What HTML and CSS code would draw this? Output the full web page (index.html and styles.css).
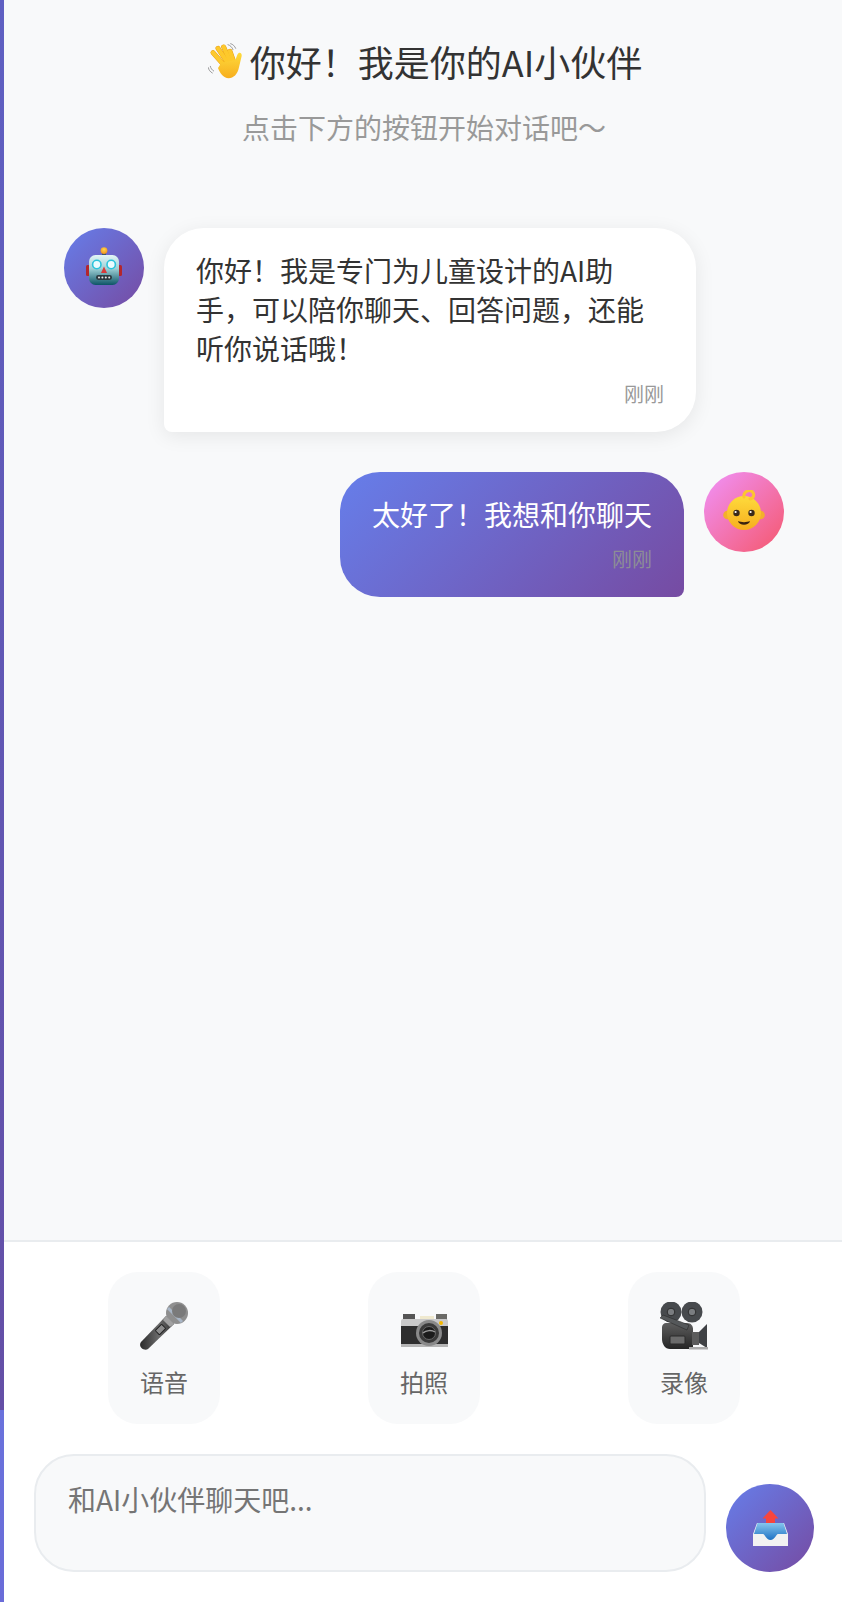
FILE: index.html
```html
<!DOCTYPE html>
<html lang="zh-CN">
<head>
<meta charset="utf-8">
<title>AI小伙伴</title>
<link rel="stylesheet" href="styles.css">
</head>
<body>
<svg class="defs" aria-hidden="true">
  <defs>
    <linearGradient id="robotHead" x1="0" y1="0" x2="0" y2="1"><stop offset="0" stop-color="#e4f5f6"/><stop offset=".45" stop-color="#9fd0d6"/><stop offset="1" stop-color="#0d5566"/></linearGradient>
    <radialGradient id="ball" cx=".5" cy=".35" r=".7"><stop offset="0" stop-color="#ffd84a"/><stop offset="1" stop-color="#f08a1c"/></radialGradient>
    <linearGradient id="yellow" x1="0" y1="0" x2="0" y2="1"><stop offset="0" stop-color="#fedb3c"/><stop offset="1" stop-color="#f7ae1e"/></linearGradient>
    <linearGradient id="micBody" x1="0" y1="0" x2="1" y2="0"><stop offset="0" stop-color="#2a2a2a"/><stop offset=".55" stop-color="#6c6c6c"/><stop offset="1" stop-color="#333"/></linearGradient>
    <linearGradient id="camBody" x1="0" y1="0" x2="0" y2="1"><stop offset="0" stop-color="#5e5e5e"/><stop offset="1" stop-color="#252525"/></linearGradient>
    <linearGradient id="trayBlue" x1="0" y1="0" x2="0" y2="1"><stop offset="0" stop-color="#86c6ee"/><stop offset="1" stop-color="#1f72c4"/></linearGradient>
  </defs>
</svg>
<div class="rail"></div>
<main class="app">
  <header class="hero">
    <h1 class="hero-title">
      <svg class="emoji-hand" viewBox="0 0 105 106" aria-hidden="true">
        <g fill="none" stroke="#8d8d8d" stroke-width="2.6" stroke-linecap="round"><path d="M60 4c7 2 13 8 15 15"/><path d="M68 1c7 2 12 7 15 14"/><path d="M1 73c1 7 6 13 12 16"/><path d="M7 69c1 6 5 11 10 14"/></g>
        <g fill="none" stroke="#e79d12" stroke-width="15" stroke-linecap="round"><path d="M15 28 52 70"/><path d="M30 15 60 60"/><path d="M47 11 68 58"/><path d="M66 24 78 58"/></g>
        <g fill="none" stroke="#fdc92c" stroke-width="12.500" stroke-linecap="round"><path d="M15 28 52 70"/><path d="M30 15 60 60"/><path d="M47 11 68 58"/><path d="M66 24 78 58"/></g>
        <path d="M40 58 82 50 88 34C92 24 103 27 101 38L93 72C89 93 76 105 62 105 46 104 36 90 30 74Z" fill="url(#yellow)"/>
      </svg><span>你好！我是你的AI小伙伴</span>
    </h1>
    <p class="hero-sub">点击下方的按钮开始对话吧～</p>
  </header>

  <section class="thread">
    <article class="msg">
      <div class="avatar avatar-bot">
        <svg class="emoji-robot" viewBox="0 0 36 38" aria-hidden="true">
          <rect x="0" y="18" width="4" height="11" rx="1.500" fill="#b3262c"/><rect x="32" y="18" width="4" height="11" rx="1.500" fill="#b3262c"/>
          <rect x="16" y="6" width="4" height="4" fill="#3a5a66"/><circle cx="18" cy="3.600" r="3.400" fill="url(#ball)"/>
          <rect x="3" y="8" width="30" height="30" rx="6.500" fill="url(#robotHead)"/>
          <circle cx="10.800" cy="17.500" r="4.200" fill="#eafcff" stroke="#2bc4dc" stroke-width="1.600"/><circle cx="25.200" cy="17.500" r="4.200" fill="#eafcff" stroke="#2bc4dc" stroke-width="1.600"/>
          <path d="M18 19.500 21 26H15Z" fill="#d83a3a"/>
          <rect x="10" y="28" width="16" height="5" rx="2.400" fill="#2d3a40"/>
          <g fill="#e8e8e8"><circle cx="13" cy="30.500" r="1"/><circle cx="16.400" cy="30.500" r="1"/><circle cx="19.800" cy="30.500" r="1"/><circle cx="23.200" cy="30.500" r="1"/></g>
        </svg>
      </div>
      <div class="bubble bubble-in">
        <p class="bubble-text">你好！我是专门为儿童设计的AI助手，可以陪你聊天、回答问题，还能听你说话哦！</p>
        <time class="bubble-time">刚刚</time>
      </div>
    </article>
    <article class="msg msg-out">
      <div class="bubble bubble-out">
        <p class="bubble-text">太好了！我想和你聊天</p>
        <time class="bubble-time">刚刚</time>
      </div>
      <div class="avatar avatar-kid">
        <svg class="emoji-baby" viewBox="0 0 42 40" aria-hidden="true">
          <circle cx="4.500" cy="25" r="4.300" fill="#f3b02c"/><circle cx="37.500" cy="25" r="4.300" fill="#f3b02c"/>
          <circle cx="21" cy="23" r="17" fill="url(#yellow)"/>
          <path d="M21 7C20 2 26-1 29 1.500 32 4 31 8 27 9" fill="none" stroke="#fcc62e" stroke-width="3" stroke-linecap="round"/>
          <circle cx="13.500" cy="23" r="3.200" fill="#3a2a1a"/><circle cx="28.500" cy="23" r="3.200" fill="#3a2a1a"/>
          <circle cx="12.600" cy="22" r="1.100" fill="#fff"/><circle cx="27.600" cy="22" r="1.100" fill="#fff"/>
          <path d="M15 31C18 32.500 24 32.500 27 31 26 36 16 36 15 31Z" fill="#3a2410"/>
        </svg>
      </div>
    </article>
  </section>

  <footer class="dock">
    <div class="tools">
      <button class="tool" type="button">
        <svg class="tool-icon" viewBox="0 0 48 48" aria-hidden="true">
          <path d="M26 14 34 22 8 47C6 48.500 3 47.500 1.500 46 0 44.500-.5 42 1 40Z" fill="url(#micBody)"/>
          <rect x="17.500" y="23" width="6" height="9" rx="1" transform="rotate(45 20.500 27.500)" fill="#8c8c8c" stroke="#222"/>
          <path d="M24 17 31 24 35 20 28 13Z" fill="#777"/>
          <circle cx="37" cy="11" r="11" fill="#8f8f8f"/>
          <path d="M26 14 34 22 30 25 23 18Z" fill="#a2a2a2"/>
          <path d="M28 6 42 20" stroke="#a9b6c6" stroke-width="3"/>
          <circle cx="39" cy="9" r="7" fill="#7a7a7a"/>
        </svg>
        <span class="tool-label">语音</span>
      </button>
      <button class="tool" type="button">
        <svg class="tool-icon" viewBox="0 0 48 48" aria-hidden="true">
          <rect x="3" y="12" width="12" height="6" fill="#555"/><rect x="20" y="14" width="14" height="6" fill="#efe9cf"/>
          <rect x="36" y="12" width="11" height="10" fill="#6a6a66"/>
          <rect x="1" y="17" width="47" height="28" rx="2" fill="#c9c9c9"/>
          <rect x="1" y="24" width="47" height="18" fill="#2e2e2e"/>
          <rect x="1" y="42" width="47" height="3" fill="#b5b5b5"/>
          <circle cx="29" cy="31" r="13" fill="#8a8a8a"/><circle cx="29" cy="31" r="10" fill="#3a3a3a"/><circle cx="29" cy="31" r="6.500" fill="#1b1b1b" stroke="#666"/>
          <path d="M23 31C26 28 32 28 35 30" stroke="#9a9a9a" stroke-width="1.500" fill="none"/>
          <circle cx="41" cy="21" r="2" fill="#f5b800"/>
        </svg>
        <span class="tool-label">拍照</span>
      </button>
      <button class="tool" type="button">
        <svg class="tool-icon" viewBox="0 0 48 48" aria-hidden="true">
          <circle cx="11" cy="10" r="10.500" fill="#474a4d"/><circle cx="32" cy="10" r="10.500" fill="#474a4d"/>
          <circle cx="11" cy="10" r="3.800" fill="#7a7d80" stroke="#2d2d2d"/><circle cx="32" cy="10" r="3.800" fill="#7a7d80" stroke="#2d2d2d"/>
          <path d="M2 25C2 23 4 21 6 21H27C31 21 33 24 33 27V47H10C5 47 2 42 2 37Z" fill="url(#camBody)"/>
          <path d="M0 16 3 13 29 23 27 28Z" fill="#55585a" stroke="#222" stroke-width=".5"/>
          <rect x="10" y="34" width="15" height="8" rx="1" fill="#6a6a6a" stroke="#2a2a2a"/>
          <path d="M32 30H39V43H32Z" fill="#5c5c5c"/>
          <path d="M39 30 47 22V46L39 41Z" fill="#3f4144"/>
          <rect x="29" y="45" width="19" height="2.500" fill="#a9a9a9"/>
        </svg>
        <span class="tool-label">录像</span>
      </button>
    </div>
    <div class="composer">
      <textarea class="composer-input" placeholder="和AI小伙伴聊天吧..."></textarea>
      <button class="send" type="button" aria-label="发送">
        <svg class="emoji-tray" viewBox="0 0 35 36" aria-hidden="true">
          <path d="M17.500 0 25.500 8.500H22V15H13V8.500H9.500Z" fill="#f8453c"/>
          <path d="M4 13H31L35 24V36H0V24Z" fill="#f2f2f2"/>
          <path d="M4.500 13H30.500L34 24H25C23 24 22 30 17.500 30S12 24 10 24H1Z" fill="url(#trayBlue)"/>
        </svg>
      </button>
    </div>
  </footer>
</main>
</body>
</html>
```
FILE: styles.css
```css
* { box-sizing: border-box; }
html, body { margin: 0; height: 100%; overflow: hidden; }
body {
  display: flex;
  width: 842px;
  height: 1602px;
  font-family: "Noto Sans CJK SC", "Noto Sans", sans-serif;
  color: #333;
  background: #f8f9fa;
}
.defs { position: absolute; width: 0; height: 0; }
.rail {
  flex: 0 0 4px;
  background: linear-gradient(180deg, #5f60c2 0, #644fa6 1410px, #6a72dc 1410px, #6a6cd8 100%);
}
.app {
  flex: 0 0 840px;
  display: flex;
  flex-direction: column;
  height: 1602px;
}
.hero { padding: 36px 30px 0; text-align: center; }
.hero-title {
  margin: 0;
  font-size: 36px;
  font-weight: 400;
  line-height: 50px;
  display: flex;
  justify-content: center;
  align-items: center;
  gap: 7px;
}
.emoji-hand { width: 35px; height: 36px; margin-left: 2px; flex: none; }
.hero-sub { margin: 22px 0 0; font-size: 28px; line-height: 39px; color: #999; }
.thread {
  flex: 1;
  display: flex;
  flex-direction: column;
  gap: 40px;
  padding: 81px 60px 0;
}
.msg { display: flex; align-items: flex-start; gap: 20px; }
.msg-out { justify-content: flex-end; }
.avatar {
  flex: none;
  width: 80px;
  height: 80px;
  padding-bottom: 4px;
  border-radius: 50%;
  display: flex;
  align-items: center;
  justify-content: center;
}
.avatar-bot { background: linear-gradient(135deg, #667eea, #764ba2); }
.avatar-kid { background: linear-gradient(135deg, #f093fb, #f5576c); }
.emoji-robot { width: 36px; height: 38px; }
.emoji-baby { width: 42px; height: 40px; }
.bubble { padding: 23px 32px 24px; border-radius: 40px; max-width: 532px; }
.bubble-in { background: #fff; border-bottom-left-radius: 8px; box-shadow: 0 4px 20px rgba(0, 0, 0, .08); }
.bubble-out { background: linear-gradient(135deg, #667eea, #764ba2); border-bottom-right-radius: 8px; color: #fff; }
.bubble-text { margin: 0; font-size: 28px; line-height: 39.2px; }
.bubble-time { display: block; margin-top: 11px; font-size: 20px; line-height: 28px; text-align: right; color: #999; }
.bubble-out .bubble-time { color: #8d8d96; }
.dock {
  flex: none;
  background: #fff;
  border-top: 2px solid #e9ecef;
  padding: 30px 30px 30px;
}
.tools { display: flex; justify-content: space-around; margin-bottom: 30px; }
.tool {
  width: 112px;
  padding: 30px 0 25px;
  border: 0;
  border-radius: 30px;
  background: #f8f9fa;
  display: flex;
  flex-direction: column;
  align-items: center;
  gap: 15px;
  font-family: inherit;
}
.tool-icon { width: 48px; height: 48px; }
.tool-label { font-size: 24px; line-height: 33.6px; color: #666; }
.composer { display: flex; align-items: flex-end; gap: 20px; }
.composer-input {
  flex: 1;
  height: 118px;
  padding: 24px 32px;
  border: 2px solid #e9ecef;
  border-radius: 40px;
  background: #f8f9fa;
  font-family: inherit;
  font-size: 28px;
  line-height: 39.2px;
  resize: none;
  outline: 0;
}
.composer-input::placeholder { color: #757575; }
.send {
  flex: none;
  width: 88px;
  height: 88px;
  padding: 0;
  border: 0;
  border-radius: 50%;
  background: linear-gradient(135deg, #667eea, #764ba2);
  display: flex;
  align-items: center;
  justify-content: center;
}
.emoji-tray { width: 35px; height: 36px; }
```
